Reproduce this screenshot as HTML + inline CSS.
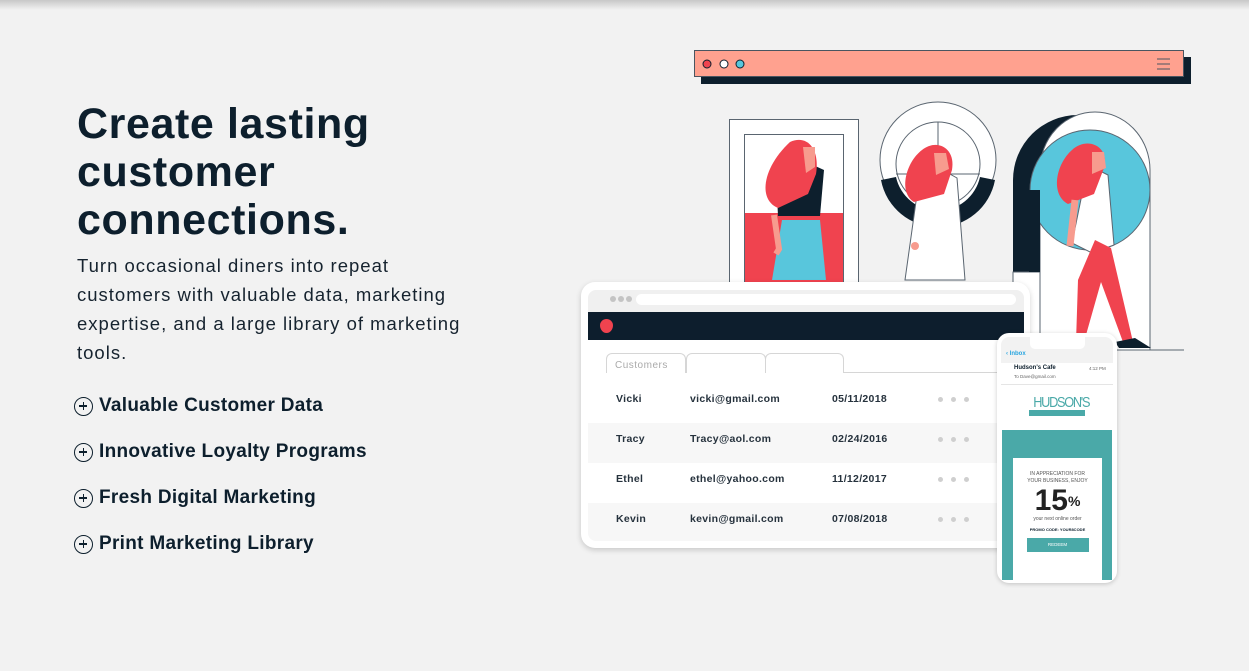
<!DOCTYPE html>
<html><head><meta charset="utf-8"><style>
*{margin:0;padding:0;box-sizing:border-box}
body{width:1249px;height:671px;background:#f2f2f2;font-family:"Liberation Sans",sans-serif;color:#0d1f2d;position:relative;overflow:hidden}
.topsh{position:absolute;left:0;top:0;width:100%;height:10px;background:linear-gradient(#c8c8c8,#f2f2f2)}
h1{position:absolute;left:77px;top:100px;font-size:43px;line-height:48px;font-weight:700;letter-spacing:0.6px;color:#0d1f2d}
p.lead{position:absolute;left:77px;top:251px;white-space:nowrap;font-size:18.5px;line-height:29px;color:#16232f;letter-spacing:1px}
.li{position:absolute;left:74px;font-size:19px;font-weight:700;display:flex;align-items:center;gap:6px;letter-spacing:.3px}
.li i{width:19px;height:19px;border:1.5px solid #0d1f2d;border-radius:50%;position:relative;display:inline-block}
.li i:before{content:"";position:absolute;left:4px;top:7.5px;width:8px;height:1.5px;background:#0d1f2d}
.li i:after{content:"";position:absolute;left:7.5px;top:4px;width:1.5px;height:8px;background:#0d1f2d}
.lap{position:absolute;left:581px;top:282px;width:449px;height:266px;background:#fff;border-radius:14px;box-shadow:0 2px 6px rgba(0,0,0,.18)}
.scr{position:absolute;left:7px;top:8px;width:436px;height:251px;background:#fff;border-radius:8px;overflow:hidden}
.bb{height:22px;background:#f0f0f0;position:relative}
.bb b{position:absolute;top:6px;width:6px;height:6px;border-radius:50%;background:#c4c4c4}
.url{position:absolute;left:48px;top:4px;width:380px;height:11px;background:#fff;border-radius:6px}
.hd{height:28px;background:#0d1e2d;position:relative}
.pin{position:absolute;left:12px;top:7px;width:13px;height:14px;background:#f0434f;border-radius:50% 50% 50% 50%/45% 45% 55% 55%}
.tab{position:absolute;top:63px;height:20px;border:1px solid #d6d6d6;border-bottom:none;border-radius:6px 6px 0 0;font-size:10px;color:#aaa;padding:6px 0 0 8px;letter-spacing:.5px;background:#fff}
.tl{position:absolute;left:0;top:82px;width:100%;height:1px;background:#d6d6d6}
.row{position:absolute;left:0;width:100%;height:40px;font-size:10.5px;font-weight:700;color:#26323d;letter-spacing:.3px}
.row span{position:absolute;top:10px}
.row em{position:absolute;top:14px;width:5px;height:5px;border-radius:50%;background:#cfcfcf}
.ph{position:absolute;left:997px;top:333px;width:120px;height:250px;background:#fff;border-radius:12px;box-shadow:0 1px 5px rgba(0,0,0,.2);overflow:hidden}
</style></head><body>
<div class="topsh"></div>
<h1>Create lasting<br>customer<br>connections.</h1>
<p class="lead">Turn occasional diners into repeat<br>customers with valuable data, marketing<br>expertise, and a large library of marketing<br>tools.</p>
<div class="li" style="top:395px"><i></i>Valuable Customer Data</div>
<div class="li" style="top:441px"><i></i>Innovative Loyalty Programs</div>
<div class="li" style="top:487px"><i></i>Fresh Digital Marketing</div>
<div class="li" style="top:533px"><i></i>Print Marketing Library</div>

<svg style="position:absolute;left:0;top:0" width="1249" height="671">
<rect x="701" y="57" width="490" height="27" fill="#0d1f2d"/>
<rect x="694.5" y="50.5" width="489" height="26" fill="#ffa18f" stroke="#4a5560"/>
<circle cx="707" cy="64" r="4" fill="#f0434f" stroke="#0d1f2d"/><circle cx="724" cy="64" r="4" fill="#fff" stroke="#0d1f2d"/><circle cx="740" cy="64" r="4" fill="#58c6dc" stroke="#0d1f2d"/>
<path d="M1157 59h13M1157 64h13M1157 69h13" stroke="#4a5560"/>
<rect x="729.5" y="119.5" width="129" height="180" fill="#fff" stroke="#5a6570"/>
<rect x="744.5" y="134.5" width="99" height="160" fill="#fff" stroke="#5a6570"/>
<rect x="745" y="213" width="98" height="80" fill="#f0434f"/>
<path d="M772 280l10-60h38l6 60z" fill="#58c6dc"/>
<path d="M776 176l26-16 22 10-4 46h-42z" fill="#0d1f2d"/>
<path d="M790 142c18-8 30 8 26 32l-8 20-30 14c-20-8-16-40 12-66z" fill="#f0434f"/>
<path d="M803 147h12v20l-9 6z" fill="#f79b8e"/>
<path d="M774 215l5 34-3 5" stroke="#f79b8e" stroke-width="6" fill="none"/>
<circle cx="938" cy="160" r="58" fill="#fff" stroke="#5a6570"/>
<path d="M881 180a58 58 0 0 0 114 0l-15-3a43 43 0 0 1-84 0z" fill="#0d1f2d"/>
<circle cx="938" cy="164" r="42" fill="#fff" stroke="#5a6570"/>
<path d="M938 122v84M896 174h84" stroke="#5a6570"/>
<path d="M905 280l14-100 20-12 18 10 8 102z" fill="#fff" stroke="#5a6570"/>
<path d="M922 150c15-12 34-2 30 20l-8 24-30 8c-16-10-8-40 8-52z" fill="#f0434f"/>
<path d="M934 153h12l3 16-13 6z" fill="#f79b8e"/>
<circle cx="915" cy="246" r="4" fill="#f79b8e"/>
<path d="M1013 350v-170a65 65 0 0 1 130 0v170z" fill="#0d1f2d"/>
<rect x="1013" y="272" width="27" height="78" fill="#fff" stroke="#5a6570"/>
<path d="M1040 350v-180a55 58 0 0 1 110 0v180z" fill="#fff" stroke="#5a6570"/>
<circle cx="1090" cy="190" r="60" fill="#58c6dc" stroke="#5a6570"/>
<rect x="1029" y="190" width="11" height="82" fill="#0d1f2d"/>
<path d="M1088 165l20 10 6 70-22 8-20-10z" fill="#fff" stroke="#5a6570"/>
<path d="M1072 150c15-14 38-4 32 18l-10 26-26 10c-18-10-12-40 4-54z" fill="#f0434f"/>
<path d="M1092 152h12l2 16-14 6z" fill="#f79b8e"/>
<path d="M1078 280l17-40 16 8 22 94h-10l-22-60-17 60h-8z" fill="#f0434f"/>
<path d="M1115 342l20-4 16 10h-32z" fill="#0d1f2d"/>
<path d="M1075 200l-5 46" stroke="#f79b8e" stroke-width="7"/>
<path d="M1130 350h54" stroke="#5a6570"/>
</svg>

<div class="lap"><div class="scr">
<div class="bb"><b style="left:22px"></b><b style="left:30px"></b><b style="left:38px"></b><div class="url"></div></div>
<div class="hd"><div class="pin"></div></div>
<div class="tab" style="left:18px;width:80px">Customers</div>
<div class="tab" style="left:98px;width:80px"></div>
<div class="tab" style="left:177px;width:79px"></div>
<div class="tl" style="left:256px"></div>
<div class="row" style="top:93px"><span style="left:28px">Vicki</span><span style="left:102px">vicki@gmail.com</span><span style="left:244px">05/11/2018</span><em style="left:350px"></em><em style="left:363px"></em><em style="left:376px"></em></div>
<div class="row" style="top:133px;background:#f7f7f7"><span style="left:28px">Tracy</span><span style="left:102px">Tracy@aol.com</span><span style="left:244px">02/24/2016</span><em style="left:350px"></em><em style="left:363px"></em><em style="left:376px"></em></div>
<div class="row" style="top:173px"><span style="left:28px">Ethel</span><span style="left:102px">ethel@yahoo.com</span><span style="left:244px">11/12/2017</span><em style="left:350px"></em><em style="left:363px"></em><em style="left:376px"></em></div>
<div class="row" style="top:213px;background:#f7f7f7"><span style="left:28px">Kevin</span><span style="left:102px">kevin@gmail.com</span><span style="left:244px">07/08/2018</span><em style="left:350px"></em><em style="left:363px"></em><em style="left:376px"></em></div>
</div></div>

<div class="ph">
<div style="position:absolute;left:4px;top:4px;width:112px;height:26px;background:#f2f2f2;border-radius:8px 8px 0 0"></div>
<div style="position:absolute;left:33px;top:4px;width:55px;height:12px;background:#fff;border-radius:0 0 5px 5px"></div>
<div style="position:absolute;left:9px;top:18px;font-size:6px;color:#2aa6e0;font-weight:700">‹ Inbox</div>
<div style="position:absolute;left:17px;top:32px;font-size:6px;font-weight:700">Hudson's Cafe</div>
<div style="position:absolute;left:92px;top:33px;font-size:4.5px;color:#666">4:12 PM</div>
<div style="position:absolute;left:17px;top:41px;font-size:4.5px;color:#666">To Dave@gmail.com</div>
<div style="position:absolute;left:4px;top:51px;width:112px;height:1px;background:#e5e5e5"></div>
<div style="position:absolute;left:32px;top:61px;width:56px;text-align:center;font-size:15px;color:#4aa9a8;letter-spacing:-1.5px;transform:scaleX(.85)">HUDSON'S</div>
<div style="position:absolute;left:32px;top:77px;width:56px;height:6px;background:#4aa9a8"></div>
<div style="position:absolute;left:5px;top:97px;width:110px;height:150px;background:#4aa9a8"></div>
<div style="position:absolute;left:16px;top:125px;width:89px;height:125px;background:#fff;text-align:center">
<div style="font-size:5px;color:#555;margin-top:13px;line-height:7px">IN APPRECIATION FOR<br>YOUR BUSINESS, ENJOY</div>
<div style="font-size:30px;font-weight:700;color:#222;line-height:30px;margin-top:1px">15<span style="font-size:14px;vertical-align:top">%</span></div>
<div style="font-size:5px;color:#555">your next online order</div>
<div style="font-size:4px;font-weight:700;margin-top:5px">PROMO CODE: YOUR8CODE</div>
<div style="margin:6px auto 0;width:62px;height:14px;background:#4aa9a8;color:#fff;font-size:4.5px;line-height:14px">REDEEM</div>
</div>
</div>
</body></html>
